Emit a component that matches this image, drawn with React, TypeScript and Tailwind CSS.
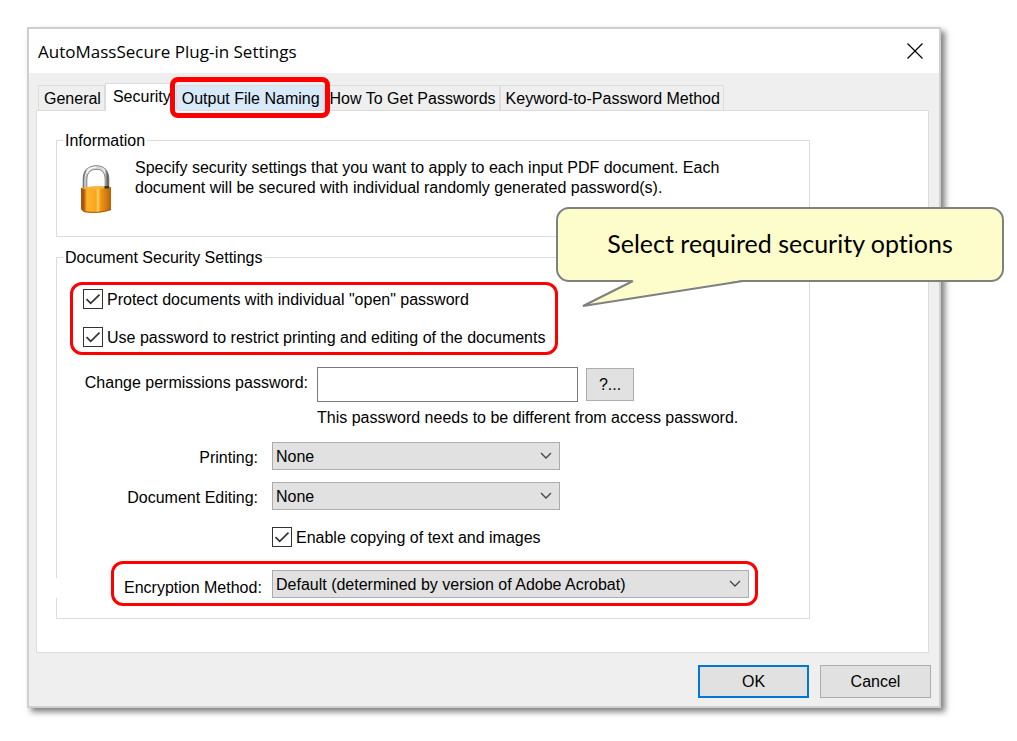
import type { ReactNode } from "react";
import { clsx } from "clsx";

const tabs = [
    { label: "General" },
    { label: "Security", active: true },
    { label: "Output File Naming", hovered: true },
    { label: "How To Get Passwords" },
    { label: "Keyword-to-Password Method" },
];

function Checkbox({ id, children }: { id: string; children: ReactNode }) {
    return (
        <div className="flex h-5 items-center gap-1">
            <span className="relative size-5 shrink-0">
                <input
                    id={id}
                    type="checkbox"
                    defaultChecked
                    className="peer block size-5 appearance-none border border-[#333] bg-white"
                />
                <svg
                    viewBox="0 0 20 20"
                    className="pointer-events-none absolute inset-0 hidden size-5 peer-checked:block"
                    fill="none"
                    stroke="#333"
                    strokeWidth="1.7"
                >
                    <path d="M3.5 10.2 7.7 14.4 16.5 5.6" />
                </svg>
            </span>
            <label htmlFor={id} className="pt-[2px]">{children}</label>
        </div>
    );
}

function Select({ id, options, className }: { id: string; options: string[]; className: string }) {
    return (
        <div className={clsx("relative", className)}>
            <select
                id={id}
                className="block h-7 w-full appearance-none border border-[#adadad] bg-[#e1e1e1] pl-[3px] pr-7 pt-[2px] leading-5"
            >
                {options.map((option) => (
                    <option key={option}>{option}</option>
                ))}
            </select>
            <svg
                viewBox="0 0 12 8"
                className="pointer-events-none absolute right-2 top-[10px] h-2 w-3"
                fill="none"
                stroke="#444"
                strokeWidth="1.3"
            >
                <path d="M1 1 6 6 11 1" />
            </svg>
        </div>
    );
}

function Group({ title, className, children }: { title: string; className: string; children: ReactNode }) {
    return (
        <fieldset className={clsx("relative border border-[#dcdcdc] px-[6px]", className)}>
            <legend className="h-[19px] px-[2px]">{title}</legend>
            {children}
        </fieldset>
    );
}

function Padlock() {
    return (
        <svg viewBox="0 0 32 48" className="h-12 w-8 shrink-0" fill="none">
            <defs>
                <linearGradient id="brass" x1="0" x2="1" y1="0" y2="0">
                    <stop offset="0" stopColor="#b75c08" />
                    <stop offset="0.12" stopColor="#c96d0c" />
                    <stop offset="0.2" stopColor="#fdb52f" />
                    <stop offset="0.5" stopColor="#f9a51c" />
                    <stop offset="0.56" stopColor="#ffd061" />
                    <stop offset="0.65" stopColor="#f09a16" />
                    <stop offset="1" stopColor="#b8610a" />
                </linearGradient>
                <linearGradient id="steel" x1="0" x2="1" y1="0" y2="0">
                    <stop offset="0" stopColor="#777" />
                    <stop offset="0.12" stopColor="#eee" />
                    <stop offset="0.5" stopColor="#ccc" />
                    <stop offset="0.9" stopColor="#e5e5e5" />
                    <stop offset="1" stopColor="#666" />
                </linearGradient>
            </defs>
            <path d="M5 24V14C5 6 10 2.5 16.5 2.5S27 7 27 14v9" stroke="#777" strokeWidth="4.6" />
            <path d="M5 24V14C5 6 10 2.5 16.5 2.5S27 7 27 14v9" stroke="url(#steel)" strokeWidth="3.2" />
            <path d="M5 23V14C5 6 10 2.2 16.5 2.2" stroke="#fff" strokeWidth="1" />
            <path d="M1 23Q16 20 31 22V45Q16 50 4 47L1 44Z" fill="url(#brass)" />
            <path d="M1 23Q16 20 31 22Q18 25 4 24Z" fill="#f6b33c" />
            <path d="M4 24V47L1 44V23Z" fill="#ae5508" />
            <path d="M24.5 21V23.5H29V21" fill="#333" />
            <path d="M4 46.5Q18 49 31 44.5" stroke="#a95707" />
        </svg>
    );
}

function Callout() {
    return (
        <div className="absolute -right-[65px] top-[178px] flex h-[75px] w-[448px] items-center justify-center rounded-[13px] border-2 border-[#808080] bg-[#fdfdcb] pb-[3px] font-[Lato,sans-serif] text-[25px] [font-variant-ligatures:none]">
            Select required security options
            <svg
                viewBox="0 0 170 30"
                className="absolute left-[18px] top-[69px] h-[30px] w-[170px]"
                fill="none"
            >
                <path d="M59 1 7 28 167 2V0H59Z" fill="#fdfdcb" />
                <path d="M57 3 7 28 167 3" stroke="#808080" strokeWidth="2" />
            </svg>
        </div>
    );
}

export default function App() {
    return (
        <div className="min-h-screen bg-white pb-[33px] pl-[27px] pr-[76px] pt-[27px] font-[Liberation_Sans,Arial,sans-serif] text-base leading-5 text-black">
            <div className="relative border-2 border-[#cfcfcf] bg-[#efefef] shadow-[4px_4px_6px_rgba(0,0,0,0.5)]">

                {/* Title bar */}
                <header className="flex h-11 items-center justify-between bg-white pl-[9px] pr-4">
                    <h1 className="pt-[2px] font-[Open_Sans,sans-serif] text-[17px]">AutoMassSecure Plug-in Settings</h1>
                    <button type="button" aria-label="Close">
                        <svg viewBox="0 0 16 16" className="size-4" stroke="#000" strokeWidth="1.2">
                            <path d="M.5.5 15.5 15.5M15.5.5.5 15.5" />
                        </svg>
                    </button>
                </header>

                <div className="pb-2 pl-[7px] pr-2 pt-[10px]">
                    {/* Tabs */}
                    <div role="tablist" className="relative flex items-end pl-[2px]">
                        {tabs.map((tab) => (
                            <div key={tab.label} className="relative">
                                <button
                                    type="button"
                                    role="tab"
                                    aria-selected={!!tab.active}
                                    className={clsx(
                                        "block whitespace-nowrap border-[#dcdcdc]",
                                        tab.active && "relative -mb-px -mr-[2px] h-7 border-l border-t bg-white px-[7px] pb-px",
                                        tab.hovered && "h-[25px] border-x border-t bg-[#d8e9f9] pl-[5px] pr-[3px] pt-[2px]",
                                        !tab.active && !tab.hovered && "h-[25px] border-r border-t pl-[5px] pr-[3px] pt-[2px] first:border-l",
                                    )}
                                >
                                    {tab.label}
                                </button>
                                {tab.hovered && (
                                    <span className="pointer-events-none absolute -inset-x-[6px] -bottom-2 -top-2 z-10 rounded-lg border-[5px] border-[#fe0000]" />
                                )}
                            </div>
                        ))}
                    </div>

                    {/* Security page */}
                    <div role="tabpanel" className="mr-[2px] border border-[#dcdcdc] bg-white pb-[33px] pl-[19px] pr-[118px] pt-5">
                        <Group title="Information" className="h-[106px]">
                            <div className="flex gap-[23px] pl-[17px] pt-2">
                                <div className="pt-[7px]">
                                    <Padlock />
                                </div>
                                <p className="max-w-[610px]">
                                    Specify security settings that you want to apply to each input PDF document. Each
                                    document will be secured with individual randomly generated password(s).
                                </p>
                            </div>
                        </Group>

                        <Group title="Document Security Settings" className="mt-[11px] pb-3">
                            <div className="ml-[7px] mt-[15px] flex w-[488px] flex-col gap-[18px] rounded-xl border-[3px] border-[#fe0000] pb-[5px] pl-[10px] pt-1">
                                <Checkbox id="open-password">Protect documents with individual "open" password</Checkbox>
                                <Checkbox id="restrict">Use password to restrict printing and editing of the documents</Checkbox>
                            </div>

                            <div className="mt-3 flex items-center">
                                <label htmlFor="permissions" className="w-[254px] self-start pr-[9px] pt-[6px] text-right">
                                    Change permissions password:
                                </label>
                                <input
                                    id="permissions"
                                    type="password"
                                    className="h-[35px] w-[261px] border border-[#7a7a7a] bg-white px-2"
                                />
                                <button type="button" className="ml-2 h-[33px] w-12 border border-[#adadad] bg-[#e1e1e1]">
                                    ?...
                                </button>
                            </div>
                            <p className="ml-[254px] mt-[6px]">This password needs to be different from access password.</p>

                            <div className="mt-[14px] grid grid-cols-[195px_288px] items-center gap-x-[14px] gap-y-3">
                                <label htmlFor="printing" className="pt-1 text-right">Printing:</label>
                                <Select id="printing" options={["None", "Low Resolution", "High Resolution"]} className="w-full" />
                                <label htmlFor="editing" className="pt-1 text-right">Document Editing:</label>
                                <Select id="editing" options={["None", "Any except extracting pages"]} className="w-full" />
                            </div>

                            <div className="ml-[209px] mt-[17px]">
                                <Checkbox id="copying">Enable copying of text and images</Checkbox>
                            </div>

                            <div className="ml-12 mt-[14px] flex w-fit items-end rounded-xl border-[3px] border-[#fe0000] pb-[5px] pl-[10px] pr-[6px] pt-[6px]">
                                <label htmlFor="encryption" className="w-[148px]">Encryption Method:</label>
                                <Select
                                    id="encryption"
                                    options={["Default (determined by version of Adobe Acrobat)", "128-bit AES", "256-bit AES"]}
                                    className="w-[477px]"
                                />
                            </div>
                            <span className="absolute -left-px bottom-5 h-5 w-px bg-white" />
                        </Group>
                    </div>

                    {/* Dialog buttons */}
                    <div className="mt-3 flex justify-end gap-[11px]">
                        <button type="button" className="h-[33px] w-[111px] border-2 border-[#0078d7] bg-[#e1e1e1]">
                            OK
                        </button>
                        <button type="button" className="h-[33px] w-[111px] border border-[#adadad] bg-[#e1e1e1]">
                            Cancel
                        </button>
                    </div>
                </div>

                <Callout />
            </div>
        </div>
    );
}
